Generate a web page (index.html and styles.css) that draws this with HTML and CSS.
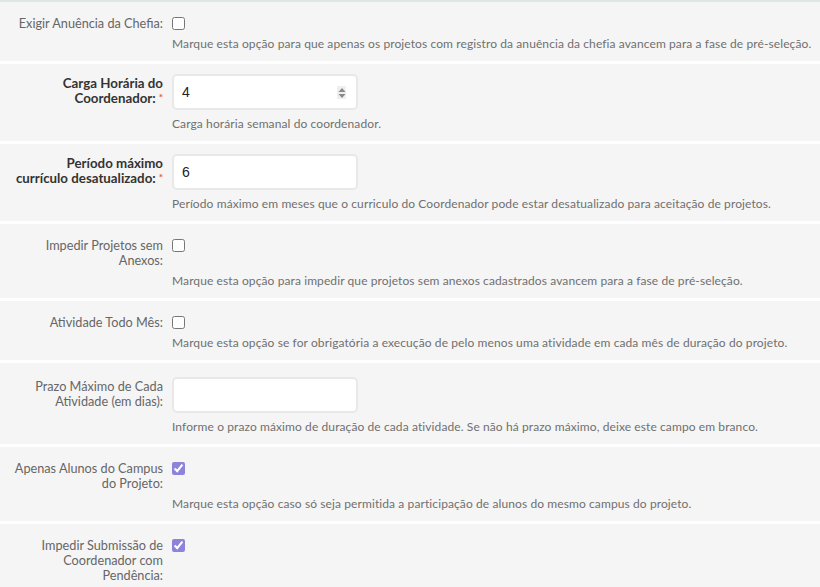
FILE: index.html
```html
<!DOCTYPE html>
<html lang="pt-BR">
<head>
    <meta charset="UTF-8">
    <meta name="viewport" content="width=device-width, initial-scale=1.0">
    <title>Configurações do Edital</title>
    <link rel="stylesheet" href="styles.css">
</head>
<body>
    <div class="form">
        <div class="row">
            <div class="line">
                <label class="lbl">Exigir Anuência da Chefia:</label>
                <div class="ctl"><input type="checkbox" class="chk"></div>
            </div>
            <p class="help">Marque esta opção para que apenas os projetos com registro da anuência da chefia avancem para a fase de pré-seleção.</p>
        </div>

        <div class="row field">
            <div class="line">
                <label class="lbl req">Carga Horária do Coordenador:<span class="star">*</span></label>
                <div class="ctl">
                    <div class="num">
                        <input type="text" class="inp" value="4">
                        <span class="spin">
                            <svg width="8" height="12" viewBox="0 0 8 12"><path d="M4 1 L7.5 5 L0.5 5 Z M0.5 7 L7.5 7 L4 11 Z" fill="#8a8a8a"/></svg>
                        </span>
                    </div>
                </div>
            </div>
            <p class="help">Carga horária semanal do coordenador.</p>
        </div>

        <div class="row field">
            <div class="line">
                <label class="lbl req">Período máximo currículo desatualizado:<span class="star">*</span></label>
                <div class="ctl"><input type="text" class="inp" value="6"></div>
            </div>
            <p class="help">Período máximo em meses que o curriculo do Coordenador pode estar desatualizado para aceitação de projetos.</p>
        </div>

        <div class="row">
            <div class="line">
                <label class="lbl">Impedir Projetos sem Anexos:</label>
                <div class="ctl"><input type="checkbox" class="chk"></div>
            </div>
            <p class="help">Marque esta opção para impedir que projetos sem anexos cadastrados avancem para a fase de pré-seleção.</p>
        </div>

        <div class="row">
            <div class="line">
                <label class="lbl">Atividade Todo Mês:</label>
                <div class="ctl"><input type="checkbox" class="chk"></div>
            </div>
            <p class="help">Marque esta opção se for obrigatória a execução de pelo menos uma atividade em cada mês de duração do projeto.</p>
        </div>

        <div class="row field wide">
            <div class="line">
                <label class="lbl">Prazo Máximo de Cada Atividade (em dias):</label>
                <div class="ctl"><input type="text" class="inp" value=""></div>
            </div>
            <p class="help">Informe o prazo máximo de duração de cada atividade. Se não há prazo máximo, deixe este campo em branco.</p>
        </div>

        <div class="row">
            <div class="line">
                <label class="lbl">Apenas Alunos do Campus do Projeto:</label>
                <div class="ctl"><input type="checkbox" class="chk" checked></div>
            </div>
            <p class="help">Marque esta opção caso só seja permitida a participação de alunos do mesmo campus do projeto.</p>
        </div>

        <div class="row">
            <div class="line">
                <label class="lbl">Impedir Submissão de Coordenador com Pendência:</label>
                <div class="ctl"><input type="checkbox" class="chk" checked></div>
            </div>
        </div>
    </div>
</body>
</html>
```

FILE: styles.css
```css
body {
    margin: 0;
    background: #ffffff;
    font-family: Lato, "Noto Sans", sans-serif;
}
.form {
    border-top: 2px solid #dfe6e6;
    display: flex;
    flex-direction: column;
    gap: 3px;
}
.row {
    background: #f5f5f5;
    padding: 14px 0 9px;
}
.row.field {
    padding-top: 10px;
}
.row.wide {
    padding-top: 14px;
}
.line {
    display: flex;
    align-items: flex-start;
    gap: 9px;
    padding-left: 13px;
}
.lbl {
    width: 150px;
    flex: none;
    text-align: right;
    font-size: 12.7px;
    line-height: 15px;
    color: #666666;
}
.field .lbl {
    padding-top: 2px;
}
.lbl.req {
    font-size: 13.3px;
    font-weight: bold;
    color: #333333;
}
.star {
    color: #e5534b;
    font-size: 10px;
    margin-left: 3px;
    vertical-align: 2px;
    line-height: 0;
}
.ctl {
    flex: none;
    display: flex;
}
.chk {
    width: 13px;
    height: 13px;
    margin: 1px 0 0;
    accent-color: #8c84d9;
}
.inp {
    width: 186px;
    height: 36px;
    box-sizing: border-box;
    border: 2px solid #e8e8e8;
    border-radius: 5px;
    background: #ffffff;
    padding: 0 8px;
    font-family: "Liberation Sans", Arial, sans-serif;
    font-size: 14px;
    color: #222222;
    outline: none;
}
.num {
    position: relative;
}
.spin {
    position: absolute;
    right: 12px;
    top: 12px;
    width: 9px;
    height: 13px;
    background: #efefef;
    display: flex;
    align-items: center;
    justify-content: center;
}
.help {
    margin: 5px 0 0 172px;
    font-size: 12px;
    letter-spacing: 0.1px;
    line-height: 16px;
    color: #707070;
}
.field .help {
    margin-top: 6px;
}
```
